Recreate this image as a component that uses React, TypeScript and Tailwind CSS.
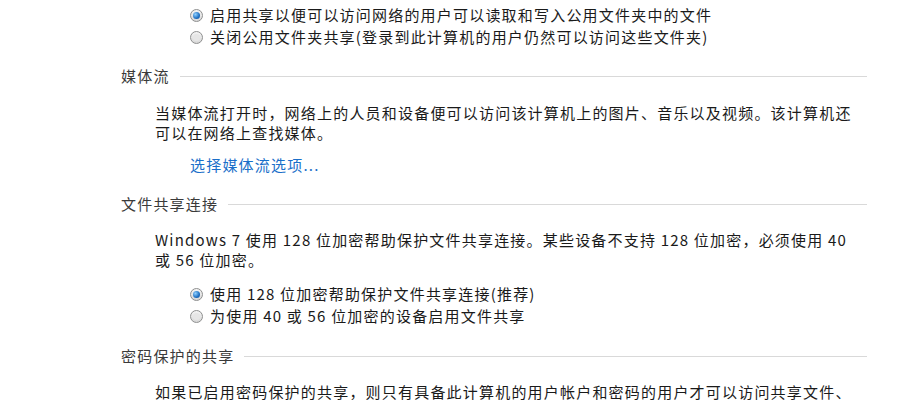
import React from 'react';

const font = { fontFamily: '"Noto Sans CJK SC", "Noto Sans", sans-serif' };

function Radio({ checked, label }: { checked?: boolean; label: string }) {
  return (
    <div className="flex items-center h-[22px]">
      <span className="w-[13px] h-[13px] rounded-full border border-[#8e8f8f] bg-gradient-to-b from-[#f4f4f4] to-[#d8d8d8] flex items-center justify-center shrink-0">
        {checked ? (
          <span className="w-[7px] h-[7px] rounded-full bg-[radial-gradient(circle_at_35%_35%,#8fd0ff,#1e6fc1_60%,#0f4a94)]" />
        ) : (
          <span className="w-[7px] h-[7px] rounded-full bg-[#e6e6e6]" />
        )}
      </span>
      <span className="ml-[7px]">{label}</span>
    </div>
  );
}

function Heading({ title }: { title: string }) {
  return (
    <div className="flex items-center h-[22px] text-[#3a3a3a]">
      <span>{title}</span>
      <div className="flex-1 h-px bg-[#d9d9d9] ml-[10px]" />
    </div>
  );
}

export default function App() {
  return (
    <div
      style={font}
      className="w-[914px] h-[400px] overflow-hidden bg-white text-[15px] tracking-[1.2px] text-[#1a1a1a] pl-[121px] pr-[47px]"
    >
      <div className="pl-[69px] pt-[4px]">
        <Radio checked label="启用共享以便可以访问网络的用户可以读取和写入公用文件夹中的文件" />
        <Radio label="关闭公用文件夹共享(登录到此计算机的用户仍然可以访问这些文件夹)" />
      </div>

      <div className="mt-[17px]">
        <Heading title="媒体流" />
      </div>
      <div className="pl-[34px] mt-[16px] leading-[20px] whitespace-nowrap">
        <div>当媒体流打开时，网络上的人员和设备便可以访问该计算机上的图片、音乐以及视频。该计算机还</div>
        <div>可以在网络上查找媒体。</div>
      </div>
      <div className="pl-[69px] mt-[12px] leading-[20px]">
        <span className="text-[#1a6fc9] cursor-pointer">选择媒体流选项...</span>
      </div>

      <div className="mt-[18px]">
        <Heading title="文件共享连接" />
      </div>
      <div className="pl-[34px] mt-[15px] leading-[20px] whitespace-nowrap">
        <div>Windows 7 使用 128 位加密帮助保护文件共享连接。某些设备不支持 128 位加密，必须使用 40</div>
        <div>或 56 位加密。</div>
      </div>
      <div className="pl-[69px] mt-[13px]">
        <Radio checked label="使用 128 位加密帮助保护文件共享连接(推荐)" />
        <Radio label="为使用 40 或 56 位加密的设备启用文件共享" />
      </div>

      <div className="mt-[18px]">
        <Heading title="密码保护的共享" />
      </div>
      <div className="pl-[34px] mt-[15px] leading-[20px] whitespace-nowrap">
        <div>如果已启用密码保护的共享，则只有具备此计算机的用户帐户和密码的用户才可以访问共享文件、</div>
      </div>
    </div>
  );
}
